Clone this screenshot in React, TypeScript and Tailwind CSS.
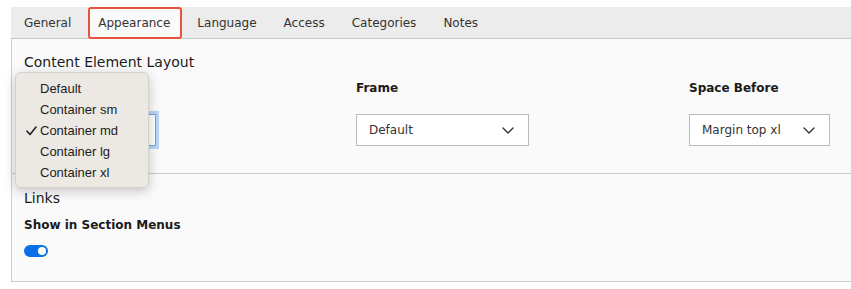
import React from "react";

const tabs = ["General", "Appearance", "Language", "Access", "Categories", "Notes"];
const layoutOptions = ["Default", "Container sm", "Container md", "Container lg", "Container xl"];

function Chevron() {
  return (
    <svg width="12" height="7" viewBox="0 0 12 7" fill="none" className="shrink-0">
      <path d="M1 1l5 5 5-5" stroke="#333" strokeWidth="1.4" strokeLinecap="round" strokeLinejoin="round" />
    </svg>
  );
}

function SelectBox({ value, width, focused }: { value: string; width: string; focused?: boolean }) {
  return (
    <div
      className={`flex h-[32px] items-center justify-between border bg-white pl-[12px] pr-[14px] text-[12px] text-[#333] ${width} ${
        focused ? "border-[#6aa5ea] shadow-[0_0_0_3px_#b9d5f5]" : "border-[#bbbbbb]"
      }`}
    >
      <span>{value}</span>
      <Chevron />
    </div>
  );
}

export default function App() {
  return (
    <div
      className="relative h-[289px] w-[851px] overflow-hidden bg-white pl-[11px] pt-[7px] text-[#1a1a1a]"
      style={{ fontFamily: '"DejaVu Sans", Verdana, sans-serif' }}
    >
      {/* tab bar */}
      <div className="flex h-[32px] border-b border-[#c8c8c8] bg-[#ececec] text-[12px] text-[#333]">
        {tabs.map((t) => (
          <div
            key={t}
            className={`relative flex items-center px-[13.5px] ${t === "General" ? "pl-[13px]" : ""}`}
          >
            {t === "Appearance" && (
              <span className="absolute -bottom-px left-[3px] right-[2px] top-0 rounded-[3px] border-2 border-[#e5553b] bg-[#fafafa]" />
            )}
            <span className="relative">{t}</span>
          </div>
        ))}
      </div>

      {/* panel */}
      <div className="border-b border-l border-[#cccccc] bg-[#fafafa]">
        <div className="border-b border-[#cccccc] pb-[27px] pl-[12px] pt-[13px]">
          <h2 className="text-[14px] leading-[20px]">Content Element Layout</h2>
          <div className="mt-[8px] grid grid-cols-[332px_333px_1fr]">
            <div>
              {/* label and value sit under the open menu */}
              <div className="h-[16px]" />
              <div className="mt-[18px]">
                <SelectBox value="" width="w-[132px]" focused />
              </div>
            </div>
            <div>
              <div className="text-[12px] font-bold leading-[16px]">Frame</div>
              <div className="mt-[18px]">
                <SelectBox value="Default" width="w-[173px]" />
              </div>
            </div>
            <div>
              <div className="text-[12px] font-bold leading-[16px]">Space Before</div>
              <div className="mt-[18px]">
                <SelectBox value="Margin top xl" width="w-[141px]" />
              </div>
            </div>
          </div>
        </div>
        <div className="pb-[24px] pl-[12px] pt-[14px]">
          <h2 className="text-[14px] leading-[20px]">Links</h2>
          <div className="mt-[9px] text-[12px] font-bold leading-[16px]">Show in Section Menus</div>
          <div className="mt-[12px] flex h-[12px] w-[24px] items-center justify-end rounded-full bg-[#0a70e6] pr-[2px]">
            <span className="h-[8px] w-[8px] rounded-full bg-white" />
          </div>
        </div>
      </div>

      {/* open select menu */}
      <div
        className="absolute left-[15px] top-[72px] w-[134px] rounded-[6px] border border-[#d6d1cb] bg-[#ece8e3] pb-[4px] pt-[5px] text-[13px] text-[#1d1d1d] shadow-[0_3px_12px_rgba(0,0,0,0.22)]"
        style={{ fontFamily: '"Liberation Sans", Arial, sans-serif' }}
      >
        {layoutOptions.map((o) => (
          <div key={o} className="relative flex h-[21px] items-center pl-[24px]">
            {o === "Container md" && (
              <svg width="11" height="10" viewBox="0 0 11 10" fill="none" className="absolute left-[10px] top-[6px]">
                <path d="M1 5.2l3 3.3L10 1" stroke="#222" strokeWidth="1.6" strokeLinecap="round" strokeLinejoin="round" />
              </svg>
            )}
            <span>{o}</span>
          </div>
        ))}
      </div>
    </div>
  );
}
